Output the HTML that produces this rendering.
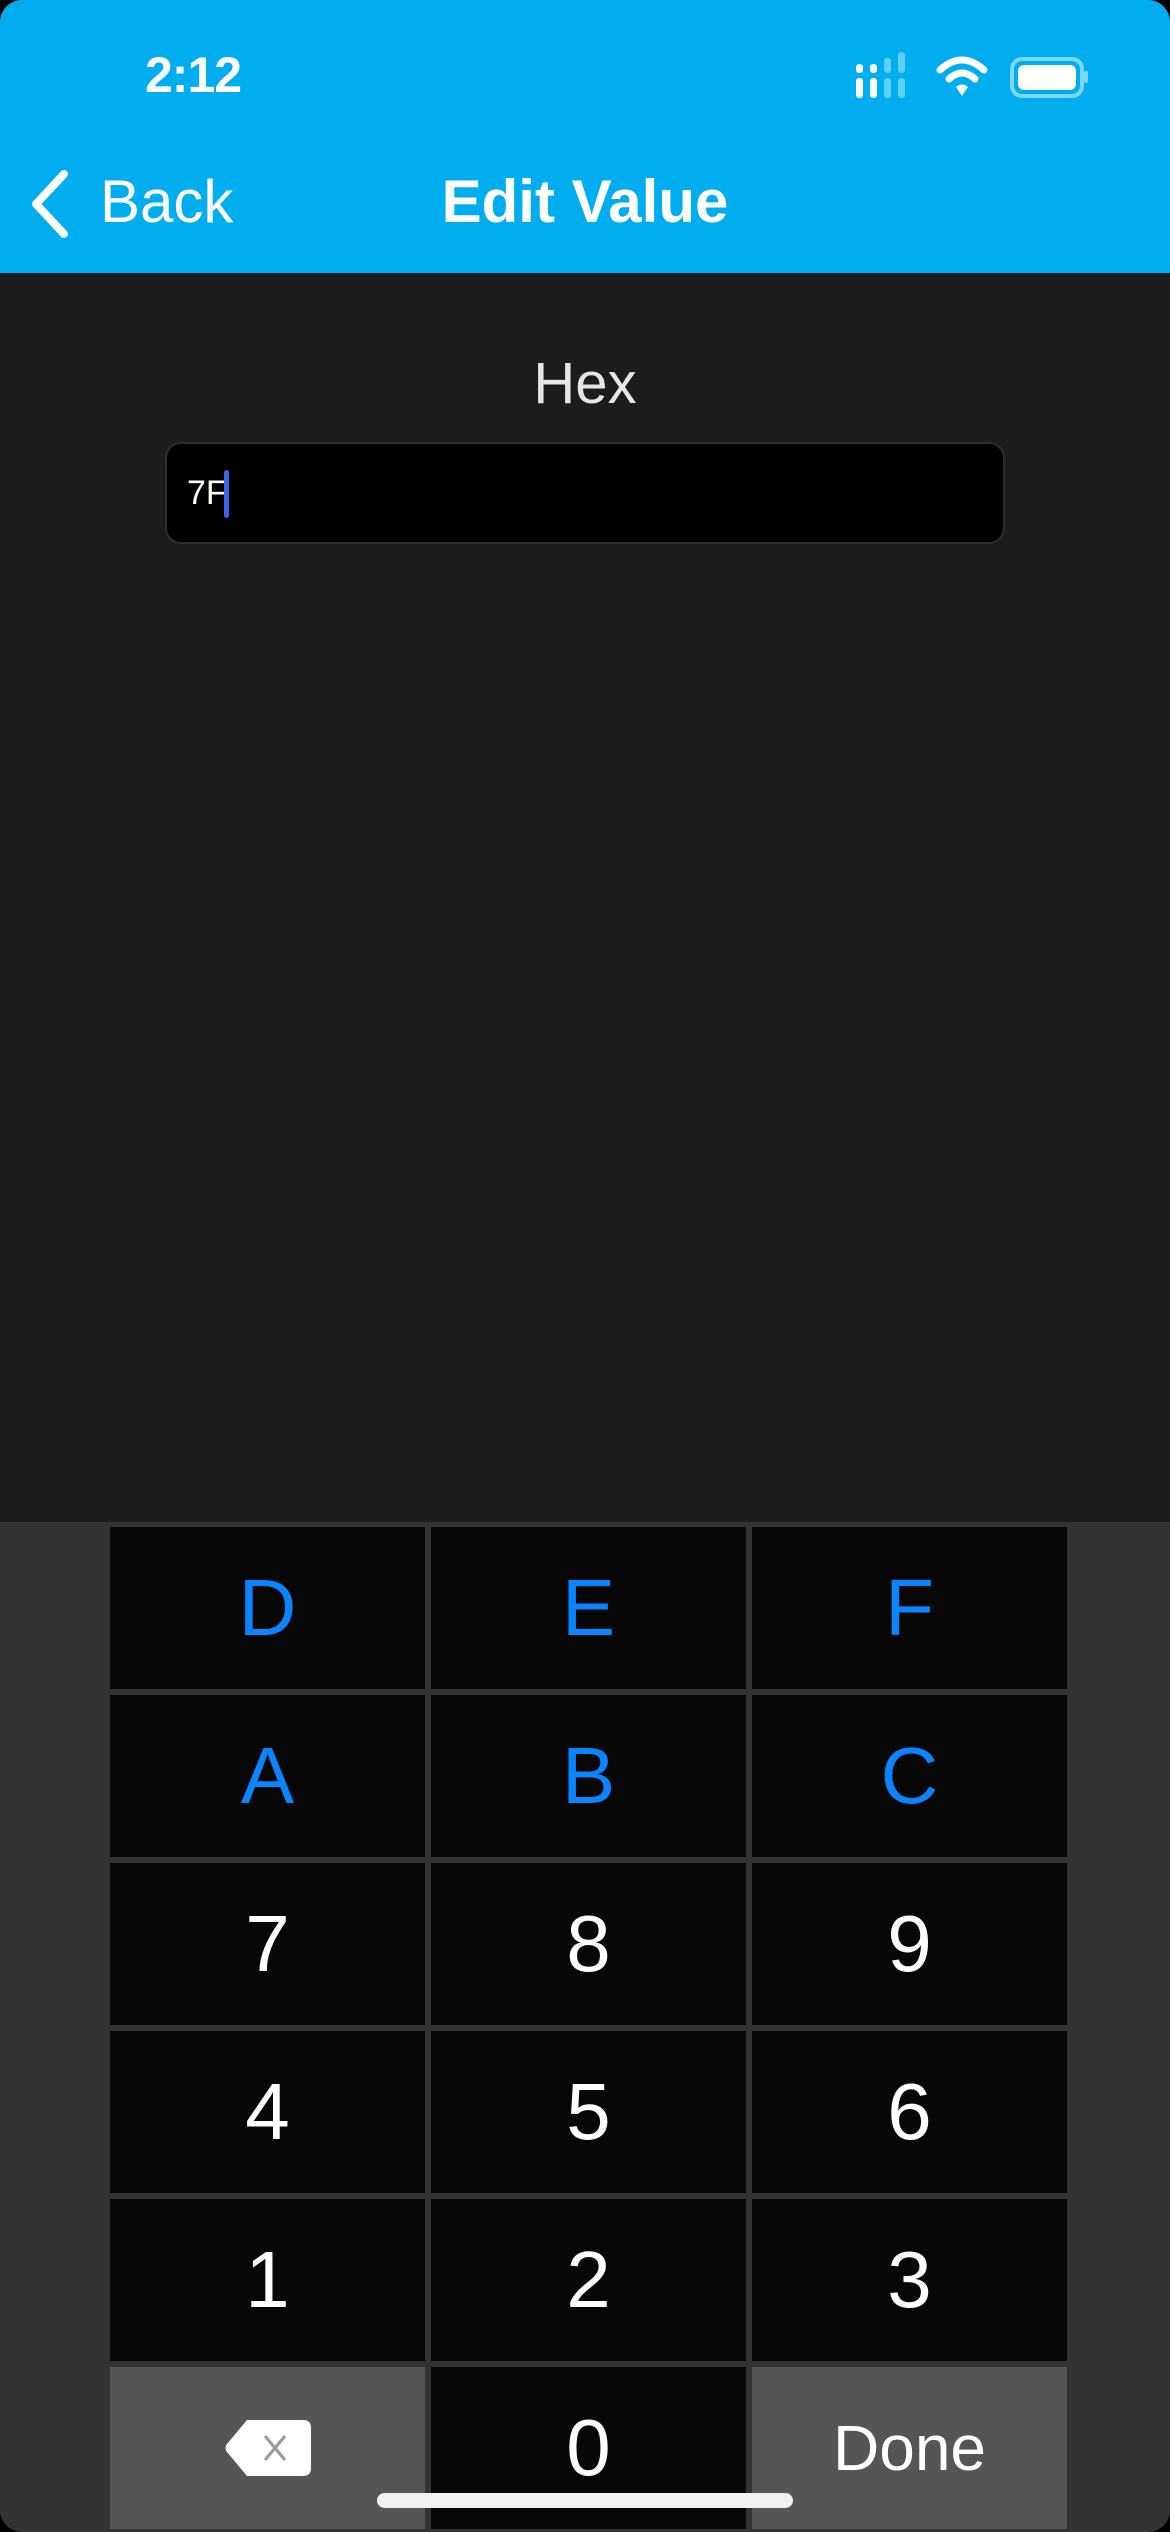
<!DOCTYPE html>
<html><head><meta charset="utf-8"><style>
*{margin:0;padding:0;box-sizing:border-box}
body{width:1170px;height:2532px;background:#000;overflow:hidden;font-family:"Liberation Sans",sans-serif}
.scr{position:absolute;left:0;top:0;width:1170px;height:2532px;border-radius:22px;overflow:hidden;background:#1c1c1e}
.nav{position:absolute;left:0;top:0;width:1170px;height:273px;background:#00aeef}
.t{position:absolute;color:#fff;white-space:nowrap}
.kb{position:absolute;left:0;top:1522px;width:1170px;height:1010px;background:#333}
.k{position:absolute;width:315px;height:162px;background:#070707;display:flex;align-items:center;justify-content:center;font-size:80px;color:#fff}
.b{color:#0a84ff}
.g{background:#555}
</style></head><body><div class="scr">
<div class="nav">
<div class="t" style="left:145px;top:46px;font-size:50px;font-weight:bold;letter-spacing:-1px">2:12</div>
<svg style="position:absolute;left:850px;top:52px" width="240" height="50" viewBox="0 0 240 50">
<rect x="6" y="26" width="7" height="20" rx="3" fill="#fff"/>
<rect x="6" y="12" width="7" height="9" rx="3" fill="#fff"/>
<rect x="20" y="26" width="7" height="20" rx="3" fill="#fff"/>
<rect x="20" y="12" width="7" height="9" rx="3" fill="#fff"/>
<rect x="34" y="26" width="7" height="20" rx="3" fill="#5fcff5"/>
<rect x="34" y="6" width="7" height="15" rx="3" fill="#5fcff5"/>
<rect x="48" y="26" width="7" height="20" rx="3" fill="#5fcff5"/>
<rect x="48" y="0" width="7" height="21" rx="3" fill="#5fcff5"/>
<path d="M90 18 Q112 -2 134 18" stroke="#fff" stroke-width="7" fill="none" stroke-linecap="round"/>
<path d="M99 27 Q112 15 125 27" stroke="#fff" stroke-width="7" fill="none" stroke-linecap="round"/>
<path d="M106 35 L112 44 L118 35 Q112 30 106 35Z" fill="#fff"/>
<rect x="162" y="7" width="70" height="37" rx="10" fill="none" stroke="#7fd6f7" stroke-width="4"/>
<rect x="168" y="13" width="58" height="25" rx="6" fill="#fff"/>
<rect x="234" y="19" width="4" height="12" rx="2" fill="#7fd6f7"/>
</svg>
<svg style="position:absolute;left:26px;top:168px" width="50" height="72" viewBox="0 0 50 72"><path d="M38 6 L10 36 L38 66" stroke="#fff" stroke-width="8" fill="none" stroke-linecap="round" stroke-linejoin="round"/></svg>
<div class="t" style="left:100px;top:167px;font-size:60px">Back</div>
<div class="t" style="left:0;width:1170px;text-align:center;top:167px;font-size:60px;font-weight:bold">Edit Value</div>
</div>
<div class="t" style="left:0;width:1170px;text-align:center;top:350px;font-size:58px;font-weight:300;color:#e6e6e6">Hex</div>
<div style="position:absolute;left:165px;top:442px;width:840px;height:102px;background:#000;border:2px solid #2e2e30;border-radius:16px"></div>
<div class="t" style="left:187px;top:474px;font-size:34px">7F</div>
<div style="position:absolute;left:224px;top:470px;width:5px;height:48px;background:#3d63e6;border-radius:3px"></div>
<div class="kb">
<div class="k b" style="left:110px;top:5px">D</div><div class="k b" style="left:431px;top:5px">E</div><div class="k b" style="left:752px;top:5px">F</div>
<div class="k b" style="left:110px;top:173px">A</div><div class="k b" style="left:431px;top:173px">B</div><div class="k b" style="left:752px;top:173px">C</div>
<div class="k" style="left:110px;top:341px">7</div><div class="k" style="left:431px;top:341px">8</div><div class="k" style="left:752px;top:341px">9</div>
<div class="k" style="left:110px;top:509px">4</div><div class="k" style="left:431px;top:509px">5</div><div class="k" style="left:752px;top:509px">6</div>
<div class="k" style="left:110px;top:677px">1</div><div class="k" style="left:431px;top:677px">2</div><div class="k" style="left:752px;top:677px">3</div>
<div class="k g" style="left:110px;top:845px"><svg width="90" height="60" viewBox="0 0 90 60"><path d="M24 2 H80 Q88 2 88 10 V50 Q88 58 80 58 H24 L4 34 Q1 30 4 26 Z" fill="#fff"/><path d="M42 18 L62 42 M62 18 L42 42" stroke="#999" stroke-width="3"/></svg></div>
<div class="k" style="left:431px;top:845px">0</div>
<div class="k g" style="left:752px;top:845px;font-size:64px">Done</div>
</div>
<div style="position:absolute;left:377px;top:2493px;width:416px;height:15px;background:#f2f2f2;border-radius:8px"></div>
</div></body></html>
